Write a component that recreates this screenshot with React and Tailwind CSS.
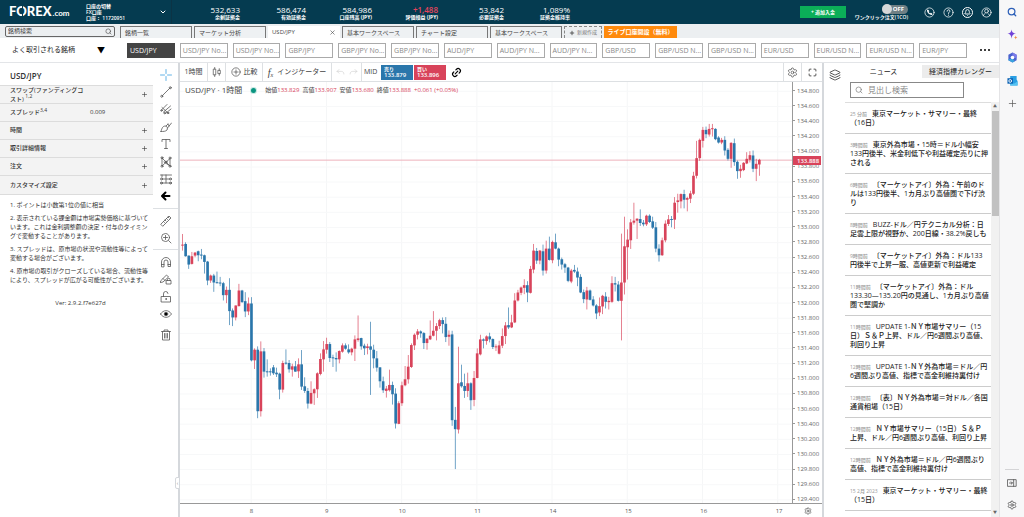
import {
  Bell,
  ChevronDown,
  Layers,
  Link2,
  Maximize,
  Plus,
  Search,
  Settings,
  X,
} from "lucide-react";

const stats = [
  { value: "532,633", label: "余剰証拠金" },
  { value: "586,474", label: "有効証拠金" },
  { value: "584,986", label: "口座残高 (JPY)" },
  { value: "+1,488", label: "評価損益 (JPY)", gain: true },
  { value: "53,842", label: "必要証拠金" },
  { value: "1,089%", label: "証拠金維持率" },
];

const tabs = [
  { name: "銘柄一覧" },
  { name: "マーケット分析" },
  { name: "USD/JPY", active: true },
  { name: "基本ワークスペース" },
  { name: "チャート設定" },
  { name: "基本ワークスペース" },
];

const symbols = [
  "USD/JPY",
  "USD/JPY No...",
  "USD/JPY No...",
  "GBP/JPY",
  "GBP/JPY No...",
  "GBP/JPY No...",
  "AUD/JPY",
  "AUD/JPY N...",
  "AUD/JPY N...",
  "GBP/USD",
  "GBP/USD N...",
  "GBP/USD N...",
  "EUR/USD",
  "EUR/USD N...",
  "EUR/USD N...",
  "EUR/JPY",
];

const news = [
  { time: "25 分前", lines: ["東京マーケット・サマリー・最終", "（16日）"] },
  { time: "3時間前", lines: ["東京外為市場・15時＝ドル小幅安", "133円後半、米金利低下や利益確定売りに押", "される"] },
  { time: "6時間前", lines: ["〔マーケットアイ〕外為：午前のド", "ルは133円後半、1カ月ぶり高値圏で下げ渋", "り"] },
  { time: "8時間前", lines: ["BUZZ-ドル／円テクニカル分析：日", "足雲上限が視野か、200日線・38.2%戻しも"] },
  { time: "9時間前", lines: ["〔マーケットアイ〕外為：ドル133", "円後半で上昇一服、高値更新で利益確定"] },
  { time: "11時間前", lines: ["〔マーケットアイ〕外為：ドル", "133.30―135.20円の見通し、1カ月ぶり高値", "圏で堅調か"] },
  { time: "11時間前", lines: ["UPDATE 1-ＮＹ市場サマリー（15", "日）Ｓ＆Ｐ上昇、ドル／円6週間ぶり高値、", "利回り上昇"] },
  { time: "12時間前", lines: ["UPDATE 1-ＮＹ外為市場＝ドル／円", "6週間ぶり高値、指標で高金利維持裏付け"] },
  { time: "12時間前", lines: ["〔表〕ＮＹ外為市場＝対ドル／各国", "通貨相場（15日）"] },
  { time: "12時間前", lines: ["ＮＹ市場サマリー（15日）Ｓ＆Ｐ", "上昇、ドル／円6週間ぶり高値、利回り上昇"] },
  { time: "12時間前", lines: ["ＮＹ外為市場＝ドル／円6週間ぶり", "高値、指標で高金利維持裏付け"] },
  { time: "15 2月 2023", lines: ["東京マーケット・サマリー・最終", "（15日）"] },
];

const notes = [
  "1. ポイントは小数第1位の値に相当",
  "2. 表示されている課金額は市場実勢価格に基づいています。これは金利調整額の決定・付与のタイミングで変動することがあります。",
  "3. スプレッドは、原市場の状況や流動性等によって変動する場合がございます。",
  "4. 原市場の取引がクローズしている場合、流動性等により、スプレッドが広がる可能性がございます。",
];

// each candle: direction, body top, body bottom, high, low
const firstWeek = `r 60 63 28 78,b 58 95 53 96,b 93 120 93 133,r 95 118 82 120,r 84 93 82 98,b 80 92 78 110,b 90 92 73 104,b 92 112 90 147,b 111 168 109 182,r 153 168 150 175,b 153 174 148 202,b 173 175 141 177,b 174 177 157 185,b 176 212 172 228,r 196 212 186 236,b 196 260 161 302,b 258 279 252 305,r 243 279 243 288,r 198 245 178 246,b 198 233 196 235,b 230 261 203 278,r 237 261 219 272,b 237 408 218 411,r 376 408 372 434,b 376 561 366 582,r 381 561 351 577,b 381 442 371 460,b 441 444 405 457,b 441 444 432 454,b 429 447 422 452,b 445 450 430 458,b 448 496 445 525,r 416 496 409 505,b 415 417 375 421,b 416 435 407 445,r 426 436 418 457,b 426 442 410 442,r 420 441 402 461,b 420 487 377 497,b 486 500 459 506,b 500 538 491 553,r 506 538 471 540,r 495 507 492 542,r 447 495 444 521,r 404 449 387 453,r 375 405 350 442,r 359 376 340 388,b 359 401 353 413,b 399 402 391 428,b 401 405 384 442,r 380 405 378 417,r 363 382 357 385,b 363 373 357 376,b 375 384 360 388,r 373 384 370 393,r 345 373 333 410,r 342 347 273 352,b 341 366 340 376,b 364 372 358 392,r 366 371 358 390,b 366 376 292 512,b 376 402 361 432,b 402 430 380 442,b 429 471 429 490,b 471 498 457 506,r 493 500 485 520,r 482 498 436 502,b 482 510 472 541,b 508 598 492 613,r 537 599 531 600,r 483 537 472 545,r 465 483 425 486,r 427 465 392 478,r 362 428 357 431,r 331 363 327 377,r 321 331 314 345,b 321 327 318 340,b 326 356 323 374,r 343 356 341 376,r 334 345 288 347,r 319 334 260 336,r 305 319 296 348,r 287 305 283 314,b 287 299 279 327,b 298 338 278 353,r 331 337 318 364,b 330 588 319 605,b 587 615 548 735,r 477 616 367 628,b 474 486 421 490,b 485 500 448 521,r 477 500 445 518,b 477 528 474 557,r 461 527 440 546,r 387 461 372 462,r 345 390 331 393,b 345 349 342 372,r 336 350 333 361,b 336 345 325 354,b 344 368 342 374,r 366 369 360 380,r 363 388 349 390,r 335 364 312 371,r 303 335 293 359,b 302 309 249 314,r 294 309 271 311,r 228 294 206 296,r 204 228 196 231,r 189 205 186 212,r 182 190 164 209,b 182 204 170 233,r 133 205 124 207,r 78 135 58 146,b 79 108 70 118`;

const secondWeek = `r 423 453 421 464,b 425 483 405 498,r 417 483 393 492,b 417 451 381 453,r 397 452 393 461,b 398 417 372 419,b 417 450 414 470,b 449 465 444 480,b 464 474 460 490,b 474 514 472 518,r 483 516 478 521,b 481 486 466 490,b 486 504 474 530,b 502 549 494 551,b 548 569 540 581,r 543 570 532 600,b 543 571 540 573,b 570 588 560 591,b 588 612 584 629,r 590 609 564 620,r 559 591 556 614,b 561 577 548 597,r 574 578 562 600,r 521 577 500 580,b 521 525 502 546,b 525 574 515 576,r 519 574 372 693,r 410 519 321 555,r 390 413 359 510,r 338 392 328 418,r 333 339 279 345,r 327 333 326 388,b 328 340 299 349,b 339 344 331 350,r 318 344 315 349,b 318 337 314 340,b 335 354 321 358,b 353 417 337 428,b 417 437 404 456,r 392 437 384 439,r 342 392 332 398,r 329 343 316 349,b 328 331 319 353,r 279 330 262 358,r 272 277 252 309,r 253 275 251 296,b 253 270 240 296,r 265 270 261 305,r 251 267 243 280,r 198 252 186 256,r 145 198 93 206,r 90 145 86 153,r 60 93 51 113,b 60 73 50 85,r 57 74 42 80,r 55 58 42 80,b 57 88 55 91,b 83 98 79 101,r 90 98 84 103,b 90 122 79 137,b 120 147 115 152,r 99 147 97 174,b 100 157 86 168,b 156 184 152 207,r 177 184 165 204,r 159 181 157 184,r 147 161 127 163,r 136 150 124 158,b 137 177 122 187,r 162 177 147 214,r 150 164 147 198`;

function parseCandles(text, shift) {
  return text.split(",").map((row) => {
    const [dir, ...ys] = row.split(" ");
    const [top, bottom, high, low] = ys.map((y) => Number(y) + shift);
    return { color: dir === "r" ? "#d8435a" : "#2a76ab", top, bottom, high, low };
  });
}

const candles = [...parseCandles(firstWeek, 429), ...parseCandles(secondWeek, 84)];
const prices = Array.from({ length: 28 }, (_, i) => (134.8 - i * 0.2).toFixed(3));
const days = [8, 9, 10, 11, 14, 15, 16, 17];

function Chart() {
  return (
    <svg viewBox="0 0 1839 1266" preserveAspectRatio="none" className="block h-full w-full" role="img" aria-label="USD/JPY">
      {days.map((d, i) => (
        <path key={d} d={`M${214 + i * 226} 0V1266`} stroke="#f5f6f7" strokeWidth="3" />
      ))}
      {prices.map((p, i) => (
        <path key={p} d={`M0 ${28 + i * 45.5}H1839`} stroke="#f7f8f9" strokeWidth="3" />
      ))}
      <path d="M0 235H1839" stroke="#edb3bc" strokeWidth="3" />
      {candles.map((c, i) => {
        const x = 7.5 + i * 9.42;
        return (
          <g key={i} fill={c.color}>
            <rect x={x - 1} y={c.high} width="2" height={c.low - c.high} />
            <rect x={x - 4} y={c.top} width="8" height={Math.max(3, c.bottom - c.top)} />
          </g>
        );
      })}
    </svg>
  );
}

function Icon({ children, className = "size-3" }) {
  return (
    <svg viewBox="0 0 24 24" fill="none" stroke="currentColor" strokeWidth="1.6" strokeLinecap="round" strokeLinejoin="round" className={className} aria-hidden="true">
      {children}
    </svg>
  );
}

const drawTools = [
  <g stroke="#3ba0e0"><path d="M12 1v8M12 15v8M1 12h8M15 12h8" /></g>,
  <><path d="M5 19 19 5" /><circle cx="3.5" cy="20.5" r="2" /><circle cx="20.5" cy="3.5" r="2" /></>,
  <><path d="M3 14 14 3M7 18 21 6M11 21l11-9M4 9l12 11" /><circle cx="3" cy="15" r="1.5" /><circle cx="9" cy="20" r="1.5" /><circle cx="16" cy="20" r="1.5" /></>,
  <><path d="M2 21c2-8 4-11 9-11 4 1 5 5 3 8-3 3-7 3-12 3ZM12 10l4-4M15 14l8-10" /><path d="m16 6 2 4" /></>,
  <path d="M4 7V3h16v4M12 3v18M9 21h6" />,
  <><path d="M4 4v16L20 5v15L4 4M8 12l12 8" /><circle cx="4" cy="3.5" r="2" /><circle cx="4" cy="20.5" r="2" /><circle cx="20" cy="4" r="2" /><circle cx="20" cy="20.5" r="2" /><circle cx="12" cy="12" r="2" /></>,
  <><path d="M1 4h22M4 12h16M1 20h22M12 4v16M4 4v4" /><circle cx="3" cy="12" r="2" /><circle cx="21" cy="12" r="2" /><circle cx="3" cy="20" r="2" /><circle cx="21" cy="20" r="2" /></>,
  <path d="M19 12H5M11 5l-7 7 7 7" stroke="#000" strokeWidth="4" />,
];
const measureTools = [
  <path d="m2 18 16-16 4 4L6 22ZM7 13l2 2M10 10l2 2M13 7l2 2M16 4l2 2" />,
  <><circle cx="11" cy="11" r="8" /><path d="M11 7v8M7 11h8M17 17l5 5" /></>,
];
const lockTools = [
  <path d="M3 21v-9a9 9 0 0 1 18 0v9h-5v-9a4 4 0 0 0-8 0v9ZM3 17h5M16 17h5" />,
  <><path d="m2 15 11-11 4 4L6 18l-5 1ZM6 11l4 4" /><path d="M13 15h9v7h-9ZM15 15v-2a2.500 2.500 0 0 1 5 0v2" /></>,
  <><path d="M3 11h18v11H3ZM7 11V6a4.500 4.500 0 0 1 9-1" /><circle cx="12" cy="16" r="1" /></>,
  <><path d="M1 12c6-9 16-9 22 0-6 9-16 9-22 0Z" /><circle cx="12" cy="12" r="3.500" fill="#000" /></>,
];

const toolNames = ["十字線", "トレンドライン", "ピッチフォーク", "ブラシ", "テキスト", "パターン", "予測", "矢印"];

function ToolGroup({ tools, name, className }) {
  return (
    <div className={`flex flex-col ${className}`}>
      {tools.map((tool, i) => (
        <button key={i} aria-label={name === "描画" ? toolNames[i] : `${name} ${i + 1}`} className="flex flex-1 items-center justify-center">
          <Icon>{tool}</Icon>
        </button>
      ))}
    </div>
  );
}

function Header() {
  return (
    <header className="flex h-6 shrink-0 items-center bg-[#053b50] text-white">
      <a href="#" className="flex w-[86px] items-baseline pl-[9px] font-['Lato'] text-[13px] leading-4 font-black">
        <span>
          F
          <span className="relative">
            O
            <span className="absolute top-[3px] left-1/2 h-[3px] w-px bg-[#053b50]" />
            <span className="absolute bottom-[3px] left-1/2 h-[3px] w-px bg-[#053b50]" />
          </span>
          REX
        </span>
        <span className="pl-px text-[8px] font-bold">.com</span>
      </a>
      <button className="flex h-6 w-[86px] items-center justify-between border-r border-[#0b3345] pr-1 text-left text-[5px] leading-[6px] font-semibold">
        <span>
          口座の切替
          <br />
          FX口座
          <br />
          口座： 11720951
        </span>
        <ChevronDown className="size-2" strokeWidth={3} />
      </button>
      <dl className="flex pl-[2px]">
        {stats.map((s) => (
          <div key={s.label} className="flex w-[66px] flex-col text-right">
            <dt className="order-last text-[5px] leading-[6px] font-bold">{s.label}</dt>
            <dd className={s.gain ? "text-[8px] leading-[9px] font-semibold text-[#e4455d]" : "text-[8px] leading-[9px]"}>{s.value}</dd>
          </div>
        ))}
      </dl>
      <div className="ml-auto flex items-center pr-[7px]">
        <button className="h-3 w-[46px] bg-[#0bae58] text-[5px] leading-3 font-bold">+ 追加入金</button>
        <label className="ml-2 flex w-[54px] flex-col items-end text-[5px] leading-[6px] font-semibold">
          <input type="checkbox" className="sr-only" />
          <span className="flex h-[9px] w-[26px] items-center justify-between rounded-full bg-[#6f7f84] pr-1 text-[6px] font-bold">
            <span className="size-[10px] rounded-full bg-[#d6d8d8]" />
            OFF
          </span>
          ワンクリック注文(1CO)
        </label>
        <div className="ml-4 flex gap-2">
          <button aria-label="電話"><Icon className="size-[11px]"><circle cx="12" cy="12" r="10" /><path d="M8 7c0 5 4 9 9 9M8 7l2 2M17 16l-2-2" strokeWidth="3" /></Icon></button>
          <button aria-label="ヘルプ"><Icon className="size-[11px]"><circle cx="12" cy="12" r="10" /><path d="M9 9c0-4 6-4 6 0 0 2-3 2-3 5M12 17.500v.5" strokeWidth="2" /></Icon></button>
          <button aria-label="通知" className="flex size-[11px] items-center justify-center rounded-full border border-white"><Bell className="size-[7px]" strokeWidth={3} /></button>
          <button aria-label="アカウント"><Icon className="size-[11px]"><circle cx="12" cy="12" r="10" /><circle cx="12" cy="9" r="4" /><path d="M5 19c1-4 4-4 5-6M19 19c-1-4-4-4-5-6" /></Icon></button>
        </div>
      </div>
    </header>
  );
}

function WorkspaceTabs() {
  return (
    <div className="flex h-[14px] shrink-0 items-end gap-[2px] bg-[#eceff1] pl-[5px] text-[6px] text-[#444]">
      <label className="mr-[3px] mb-px flex h-[11px] w-[110px] items-center rounded-xs border border-[#666] px-[2px]">
        <input aria-label="銘柄検索" placeholder="銘柄検索" className="h-[9px] w-full min-w-0 leading-[9px] outline-none placeholder:text-[#444]" />
        <Search className="size-[7px] shrink-0" />
      </label>
      {tabs.map((t, i) => (
        <button
          key={i}
          className={
            t.active
              ? "flex h-3 w-[72px] items-center justify-between bg-white px-1 leading-3"
              : "flex h-3 w-[72px] items-center justify-between border-x border-t border-[#777] bg-[#eef1f3] px-1 leading-3"
          }
        >
          {t.name}
          {t.active && <X className="size-[7px]" />}
        </button>
      ))}
      <button className="flex h-3 w-[38px] items-center justify-center gap-[2px] border border-b-0 border-dashed border-[#888] text-[5px] text-[#777]">
        <Plus className="size-[6px] text-[#333]" strokeWidth={3} />
        新規作成
      </button>
      <button className="h-3 w-[73px] bg-[#ff8a0c] text-[6px] leading-3 font-bold text-white">ライブ口座開設（無料）</button>
    </div>
  );
}

function SymbolBar() {
  return (
    <div className="flex h-6 shrink-0 items-center pr-2 text-[8px]">
      <button className="flex w-[127px] items-center justify-between pr-[22px] pl-3 text-[7px] text-[#222]">
        よく取引される銘柄
        <span className="text-[8px] leading-none text-black">▼</span>
      </button>
      <div className="flex min-w-0 flex-1 gap-[5px]">
        {symbols.map((s, i) => (
          <button
            key={i}
            className={
              i === 0
                ? "h-[15px] min-w-0 flex-1 overflow-hidden border border-[#444] bg-[#444] pl-[2px] text-left text-[7px] leading-[13px] whitespace-nowrap text-white"
                : "h-[15px] min-w-0 flex-1 overflow-hidden border border-[#aaa] pl-[2px] text-left text-[7px] leading-[13px] whitespace-nowrap text-[#888]"
            }
          >
            {s}
          </button>
        ))}
      </div>
      <button aria-label="その他" className="ml-3 flex w-3 justify-center gap-[2px]">
        <span className="size-[2px] rounded-full bg-black" />
        <span className="size-[2px] rounded-full bg-black" />
        <span className="size-[2px] rounded-full bg-black" />
      </button>
    </div>
  );
}

function InfoPanel() {
  return (
    <section className="w-[153px] shrink-0 text-[6px] text-[#333]">
      <h2 className="pt-[7px] pb-[3px] pl-[10px] text-[8px] leading-3 font-semibold">USD/JPY</h2>
      <div className="divide-y divide-[#dcdcdc] border-y border-[#dcdcdc] bg-[#f3f3f3] font-medium">
        <button className="flex h-[18px] w-full items-center justify-between pr-[5px] pl-[10px] text-left leading-[9px]">
          <span className="w-[84px]">
            スワップ(ファンディングコ
            <br />
            スト) <sup className="text-[5px]">1,2</sup>
          </span>
          <Plus className="size-[7px]" />
        </button>
        <div className="flex h-[18px] items-center pl-[10px]">
          <span className="w-20">
            スプレッド<sup className="text-[5px]">3,4</sup>
          </span>
          <span>0.009</span>
        </div>
        {["時間", "取引詳細情報", "注文", "カスタマイズ設定"].map((name) => (
          <button key={name} className="flex h-[18px] w-full items-center justify-between pr-[5px] pl-[10px]">
            {name}
            <Plus className="size-[7px]" />
          </button>
        ))}
      </div>
      <div className="flex flex-col gap-1 pt-[6px] pr-[2px] pl-[10px] leading-[9px]">
        {notes.map((n) => (
          <p key={n}>{n}</p>
        ))}
        <p className="pt-[10px] text-center">Ver: 2.9.2.f7e627d</p>
      </div>
    </section>
  );
}

function DrawBar() {
  return (
    <nav aria-label="描画ツール" className="relative flex w-[27px] shrink-0 flex-col border-r-2 border-[#d5d8dc] text-[#555]">
      <ToolGroup tools={drawTools} name="描画" className="mt-[3px] h-[139px]" />
      <hr className="my-[3px] border-[#dde0e3]" />
      <ToolGroup tools={measureTools} name="測定" className="h-[34px]" />
      <hr className="my-[3px] border-[#dde0e3]" />
      <ToolGroup tools={lockTools} name="固定" className="h-[70px]" />
      <button aria-label="削除" className="mt-[6px] flex justify-center">
        <Icon><path d="M3 5h18M8 5V2h8v3M5 5v17h14V5M9 9v9M12 9v9M15 9v9" /></Icon>
      </button>
      <button aria-label="閉じる" className="absolute right-[-2px] bottom-7 flex h-3 w-[5px] items-center justify-center rounded-l-xs border border-[#d5d8dc] bg-white text-[5px] leading-none text-[#888]">
        ‹
      </button>
    </nav>
  );
}

function ChartToolbar() {
  return (
    <div className="flex h-[19px] shrink-0 items-stretch border-b border-[#dde0e3] text-[7px] text-[#444]">
      <div className="flex divide-x divide-[#dde0e3]">
        <button className="w-7">1時間</button>
        <button aria-label="ローソク足" className="flex w-[18px] items-center justify-center">
          <Icon className="size-[10px]"><path d="M4 5h5v14H4ZM6.500 1v4M6.500 19v4M15 8h5v8h-5ZM17.500 4v4M17.500 16v4" /></Icon>
        </button>
        <button className="flex w-[37px] items-center justify-center gap-[3px]">
          <Icon className="size-[10px]"><circle cx="12" cy="12" r="10" /><path d="M12 7v10M7 12h10" /></Icon>
          比較
        </button>
        <button className="flex w-[69px] items-center justify-center gap-1">
          <span className="font-['Liberation_Serif'] text-[10px] italic">
            f<sub className="text-[6px]">x</sub>
          </span>
          インジケーター
        </button>
        <div className="flex w-[30px] items-center justify-center gap-1 text-[#ccc]">
          <button aria-label="元に戻す"><Icon className="size-[9px]"><path d="M8 4 3 9l5 5M3 9h11c5 0 7 3 7 7" /></Icon></button>
          <button aria-label="やり直す"><Icon className="size-[9px]"><path d="m16 4 5 5-5 5M21 9H10c-5 0-7 3-7 7" /></Icon></button>
        </div>
        <div className="flex items-center gap-px pl-[2px]">
          <span className="w-4">MID</span>
          <button className="flex h-[15px] w-8 flex-col justify-center bg-[#2a76ab] pl-[3px] text-left text-[6px] leading-[7px] font-semibold text-white">
            <span className="text-[5px] leading-[6px]">売り</span>
            133.879
          </button>
          <button className="flex h-[15px] w-8 flex-col justify-center bg-[#d8435a] pl-[3px] text-left text-[6px] leading-[7px] font-semibold text-white">
            <span className="text-[5px] leading-[6px]">買い</span>
            133.896
          </button>
          <button aria-label="リンク" className="pl-1">
            <Link2 className="size-[11px] -rotate-45 text-black" strokeWidth={2.5} />
          </button>
        </div>
      </div>
      <div className="ml-auto flex divide-x divide-[#dde0e3] border-l border-[#dde0e3]">
        <button aria-label="設定" className="flex w-[18px] items-center justify-center"><Settings className="size-[11px]" strokeWidth={1.5} /></button>
        <button aria-label="全画面" className="flex w-5 items-center justify-center"><Maximize className="size-[9px]" strokeWidth={2.5} /></button>
      </div>
    </div>
  );
}

function ChartPanel() {
  const ohlc = [
    ["始値", "133.829"],
    ["高値", "133.907"],
    ["安値", "133.680"],
    ["終値", "133.888"],
  ];
  return (
    <main className="flex min-w-0 flex-1 flex-col">
      <ChartToolbar />
      <div className="flex min-h-0 flex-1">
        <div className="relative min-w-0 flex-1 border-r border-[#999]">
          <Chart />
          <div className="absolute top-0 left-[5px] flex h-4 items-center text-[8px] whitespace-nowrap text-[#444]">
            USD/JPY · 1時間
            <span className="mx-[9px] size-[5px] rounded-full bg-[#0a9480] ring-1 ring-[#c5e8e2]" />
            <span className="flex gap-[3px] text-[6px]">
              {ohlc.map(([k, v]) => (
                <span key={k}>
                  {k}
                  <span className="text-[#d8435a]">{v}</span>
                </span>
              ))}
              <span className="text-[#d8435a]">+0.061 (+0.05%)</span>
            </span>
          </div>
        </div>
        {/* the lowest price label hangs into the time axis row */}
        <div className="relative -mb-1 flex w-[29px] flex-col pt-px text-[6px] leading-[6px] text-[#666]">
          {prices.map((p) => (
            <span key={p} className="flex min-h-0 flex-1 items-center gap-[2px] before:h-px before:w-[2px] before:bg-[#999]">
              {p}
            </span>
          ))}
          <span className="absolute top-[74px] left-0 flex h-[9px] w-7 items-center bg-[#d8435a] pl-1 font-semibold text-white">133.888</span>
        </div>
      </div>
      <div className="flex h-[14px] shrink-0 items-center border-t border-[#999] text-[6px] text-[#555]">
        <div className="flex min-w-0 flex-1 pt-px">
          {days.map((d) => (
            <span key={d} className="w-[12.3%] shrink-0 text-center first:ml-[5.5%]">{d}</span>
          ))}
        </div>
        <button aria-label="軸の設定" className="flex w-[29px] justify-center pt-px"><Settings className="size-2" /></button>
      </div>
    </main>
  );
}

function NewsPanel() {
  return (
    <aside className="flex w-[177px] shrink-0 border-l-2 border-[#d5d8dc] text-[#222]">
      <button aria-label="レイヤー" className="flex w-[21px] shrink-0 items-start justify-center pt-[6px]">
        <Layers className="size-3" strokeWidth={1.5} />
      </button>
      <div className="flex min-w-0 flex-1 flex-col">
        <div className="flex h-[17px] shrink-0 items-center text-[7px] leading-[13px]">
          <button className="flex-1">ニュース</button>
          <button className="flex-1 bg-[#ececec]">経済指標カレンダー</button>
        </div>
        <label className="mt-[2px] mr-[35px] ml-[5px] flex h-4 shrink-0 items-center gap-[5px] border border-[#888] px-1">
          <Search className="size-2 shrink-0 text-[#777]" />
          <input aria-label="見出し検索" placeholder="見出し検索" className="w-full min-w-0 text-[8px] leading-3 outline-none placeholder:text-[#888]" />
        </label>
        <div className="mt-1 flex min-h-0 flex-1">
          <ul className="min-w-0 flex-1 overflow-hidden border-t border-[#ddd]">
            {news.map((n, i) => (
              <li key={i} className="border-b border-[#ccc] py-[6px] pl-[5px]">
                <a href="#" className="block text-[7px] leading-[9px] font-medium whitespace-nowrap">
                  {n.lines.map((line, j) => (
                    <span key={j} className="block h-[9px]">
                      {j === 0 && <time className="mr-[5px] text-[5px] leading-none text-[#999]">{n.time}</time>}
                      {line}
                    </span>
                  ))}
                </a>
              </li>
            ))}
          </ul>
          <div className="flex w-2 shrink-0 flex-col items-center bg-[#f1f1f1] text-[4px] leading-[9px] text-[#666]">
            <span>▲</span>
            <span className="h-[105px] w-[7px] bg-[#c1c1c1]" />
            <span className="mt-auto">▼</span>
          </div>
        </div>
      </div>
    </aside>
  );
}

function BrowserRail() {
  return (
    <nav aria-label="サイドバー" className="flex w-[25px] shrink-0 flex-col items-center justify-between border-l border-[#e4e4e6] bg-[#f7f7f8] pt-[7px] pb-[7px] text-[#555]">
      <div className="flex flex-col items-center gap-3">
        <button aria-label="検索"><Search className="size-[10px] text-[#2c5fb8]" strokeWidth={3} /></button>
        <button aria-label="見つける">
          <svg viewBox="0 0 24 24" className="size-[11px]">
            <path d="M10 1c1 6 3 8 10 9-7 1-9 4-10 11-1-7-3-10-9-11 6-1 8-3 9-9Z" fill="#7043d8" />
            <path d="M19 14c.5 3 1.500 4 4 4.500-2.500.5-3.500 1.500-4 4.500-.5-3-1.500-4-4-4.500 2.500-.5 3.500-1.500 4-4.500Z" fill="#ef8f4a" />
          </svg>
        </button>
        <button aria-label="Microsoft 365">
          <svg viewBox="0 0 24 24" className="size-[11px]">
            <path d="m12 1 9 5v12l-9 5-9-5V6Z" fill="#4a63cf" />
            <path d="m12 1 9 5v8l-9-5Z" fill="#7b7be8" />
            <path d="m3 16 9-2 5 6-5 3-9-5Z" fill="#3ba3dd" />
            <circle cx="12" cy="12" r="4" fill="#fff" />
          </svg>
        </button>
        <button aria-label="Outlook">
          <svg viewBox="0 0 24 24" className="size-[11px]">
            <path d="M7 2h14v8l2 3v10H7Z" fill="#2a9ee3" />
            <path d="m7 15 8 4 8-5v9H7Z" fill="#56c4f2" />
            <path d="M1 7h12v12H1Z" fill="#0b63b5" />
            <circle cx="7" cy="13" r="3" fill="none" stroke="#fff" strokeWidth="2" />
          </svg>
        </button>
        <button aria-label="追加"><Plus className="size-[11px]" strokeWidth={1.5} /></button>
      </div>
      <div className="flex flex-col items-center gap-3 border-t border-[#d4d4d6] px-[2px] pt-2">
        <button aria-label="サイドバーを隠す"><Icon className="size-[10px]"><path d="M2 4h20v16H2ZM16 4v16M6 12h7M10 9l3 3-3 3" strokeWidth="2" /></Icon></button>
        <button aria-label="設定"><Settings className="size-[10px]" /></button>
      </div>
    </nav>
  );
}

export default function App() {
  return (
    <div className="flex h-screen overflow-hidden bg-white font-['Open_Sans','Noto_Sans_CJK_JP',sans-serif]">
      <div className="flex min-w-0 flex-1 flex-col">
        <Header />
        <WorkspaceTabs />
        <SymbolBar />
        <div className="flex min-h-0 flex-1 border-t border-[#e3e5e8]">
          <InfoPanel />
          <DrawBar />
          <ChartPanel />
          <NewsPanel />
        </div>
      </div>
      <BrowserRail />
    </div>
  );
}
